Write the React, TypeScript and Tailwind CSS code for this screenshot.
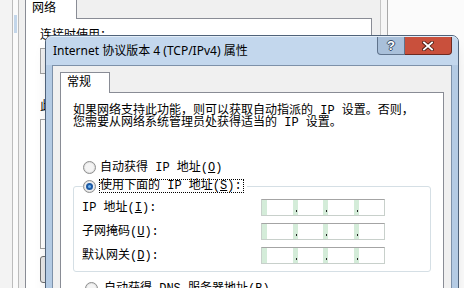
import React from "react";

const cn = "font-['Liberation_Mono','Noto_Sans_CJK_SC',monospace]";

function Radio({ checked }: { checked?: boolean }) {
  return (
    <span className="flex h-[13px] w-[13px] shrink-0 items-center justify-center rounded-full border border-[#8e8f8f] bg-[#e2e2e2]">
      <span className="flex h-[9px] w-[9px] items-center justify-center rounded-full bg-[#f4f4f4]">
        {checked && (
          <span className="flex h-[7px] w-[7px] items-center justify-center rounded-full bg-[#1d5aa5]">
            <span className="h-[3px] w-[3px] rounded-full bg-[#6fb4f0]" />
          </span>
        )}
      </span>
    </span>
  );
}

function IpField() {
  return (
    <div className="flex h-[17px] w-[124px] border border-[#c8d0cb] border-t-[#a4a4a4] bg-white">
      {[0, 1, 2, 3].map((i) => (
        <div key={i} className="flex flex-1">
          <div className="relative w-[5px] bg-[#d4ecd9]">
            {i > 0 && <span className="absolute bottom-[3px] right-px h-[2px] w-px bg-[#222]" />}
          </div>
          <div className="flex-1" />
        </div>
      ))}
    </div>
  );
}

function Row({ label }: { label: React.ReactNode }) {
  return (
    <div className="flex h-[17px] items-center">
      <div className="w-[179px] text-[12px] leading-[12px]">{label}</div>
      <IpField />
    </div>
  );
}

export default function App() {
  return (
    <div className={`relative h-[288px] w-[464px] overflow-hidden bg-[#f4f4f4] text-black ${cn}`}>
      {/* window behind */}
      <div className="absolute inset-0 flex">
        <div className="w-[12px] bg-[#f3f3f3]" />
        <div className="w-px bg-[#bcbcbc]" />
        <div className="w-[5px] bg-[#fafafa] pl-px pt-[15px]">
          <div className="h-[18px] w-[3px] bg-[#c3d6ea]" />
        </div>
        <div className="w-px bg-[#bcbcbc]" />
        <div className="w-[6px] bg-[#f0f0f0]" />
        <div className="flex w-[347px] flex-col">
          <div className="flex h-[19px]">
            <div className="w-[52px] border-x border-[#898c95] bg-white pl-[6px] pt-[2px] text-[12px] leading-[14px]">
              网络
            </div>
            <div className="flex-1 border-b border-[#898c95] bg-[#f0f0f0]" />
          </div>
          <div className="flex flex-1 flex-col border-x border-[#898c95] bg-white pl-[14px] pt-[11px]">
            <div className="text-[12px] leading-[12px]">连接时使用：</div>
            <div className="mt-[6px] h-[26px] w-[320px] border border-[#a0a0a0] bg-[#f0f0f0]" />
            <div className="mt-[27px] text-[12px] leading-[12px]">此连接使用下列项目(O)：</div>
            <div className="mt-[6px] h-[130px] w-[320px] border border-[#a0a0a0] bg-white" />
            <div className="mt-[7px] h-[27px] w-[80px] rounded-[3px] border border-[#707070] bg-[#e8e8e8]" />
          </div>
        </div>
        <div className="w-[8px] bg-[#f0f0f0]" />
        <div className="w-px bg-[#c5c5c5]" />
        <div className="w-[6px] bg-[#f6f6f6]" />
        <div className="w-px bg-[#a9a9a9]" />
        <div className="flex-1 bg-[#fbfbfb]" />
      </div>

      {/* dialog */}
      <div className="absolute left-[45px] top-[35px] z-20 flex h-[270px] w-[414px] flex-col rounded-t-[7px] border border-[#4f6279] bg-[#b4cbe4] shadow-lg">
        <div className="flex h-[29px] shrink-0 items-start justify-between rounded-t-[6px] border-t border-[#e4eef8] bg-[#c3d7ed] pl-[7px] pr-[6px]">
          <div className="pt-[6px] font-['Noto_Sans','Noto_Sans_CJK_SC',sans-serif] text-[12px] leading-[16px]">
            Internet 协议版本 4 (TCP/IPv4) 属性
          </div>
          <div className="flex h-[18px]">
            <div className="flex w-[28px] items-center justify-center rounded-bl-[4px] border border-t-0 border-[#5f738c] bg-[#a9c0da]">
              <span className="font-['Liberation_Sans',sans-serif] text-[13px] font-bold leading-[13px] text-white [text-shadow:1px_0_0_#3a4d66,-1px_0_0_#3a4d66,0_1px_0_#3a4d66,0_-1px_0_#3a4d66]">
                ?
              </span>
            </div>
            <div className="flex w-[47px] items-center justify-center rounded-br-[4px] border border-l-0 border-t-0 border-[#6e2a20] bg-[#c9503c]">
              <svg width="12" height="10" viewBox="0 0 12 10">
                <path d="M2 1.5L10 8.5M10 1.5L2 8.5" stroke="#4a1a12" strokeWidth="3.6" strokeLinecap="square" />
                <path d="M2 1.5L10 8.5M10 1.5L2 8.5" stroke="#fff" strokeWidth="1.9" strokeLinecap="square" />
              </svg>
            </div>
          </div>
        </div>

        <div className="ml-[6px] flex w-[400px] flex-1 flex-col border border-[#7d91a9] bg-[#f0f0f0] pl-[7px] pt-[6px]">
          <div className="relative z-10 -mb-px flex h-[21px] w-[50px] items-center border border-b-0 border-[#898c95] bg-white pl-[6px] text-[12px] leading-[12px]">
            常规
          </div>
          <div className="flex w-[384px] flex-1 flex-col border border-[#898c95] bg-white pl-[12px] pt-[12px]">
            <p className="text-[12px] leading-[12px]">
              如果网络支持此功能，则可以获取自动指派的 IP 设置。否则，
              <br />
              您需要从网络系统管理员处获得适当的 IP 设置。
            </p>

            <div className="mt-[32px] flex h-[13px] items-center gap-[4px] pl-[10px] text-[12px] leading-[12px]">
              <Radio />
              <span>
                自动获得 IP 地址(<u>O</u>)
              </span>
            </div>

            <fieldset className="mt-[5px] w-[358px] rounded-[3px] border border-[#d5dfe5] pb-[7px] pl-[8px]">
              <legend className="ml-px">
                <span className="flex h-[14px] items-center gap-[3px] pr-[3px] text-[12px] leading-[12px]">
                  <Radio checked />
                  <span className="border border-dotted border-black pr-px">
                    使用下面的 IP 地址(<u>S</u>):
                  </span>
                </span>
              </legend>
              <div className="mt-[6px] flex flex-col gap-[7px]">
                <Row label={<>IP 地址(<u>I</u>):</>} />
                <Row label={<>子网掩码(<u>U</u>):</>} />
                <Row label={<>默认网关(<u>D</u>):</>} />
              </div>
            </fieldset>

            <div className="mt-[10px] flex h-[13px] items-center gap-[6px] pl-[12px] text-[12px] leading-[12px]">
              <Radio />
              <span>
                自动获得 DNS 服务器地址(<u>B</u>)
              </span>
            </div>
          </div>
        </div>
      </div>
    </div>
  );
}
